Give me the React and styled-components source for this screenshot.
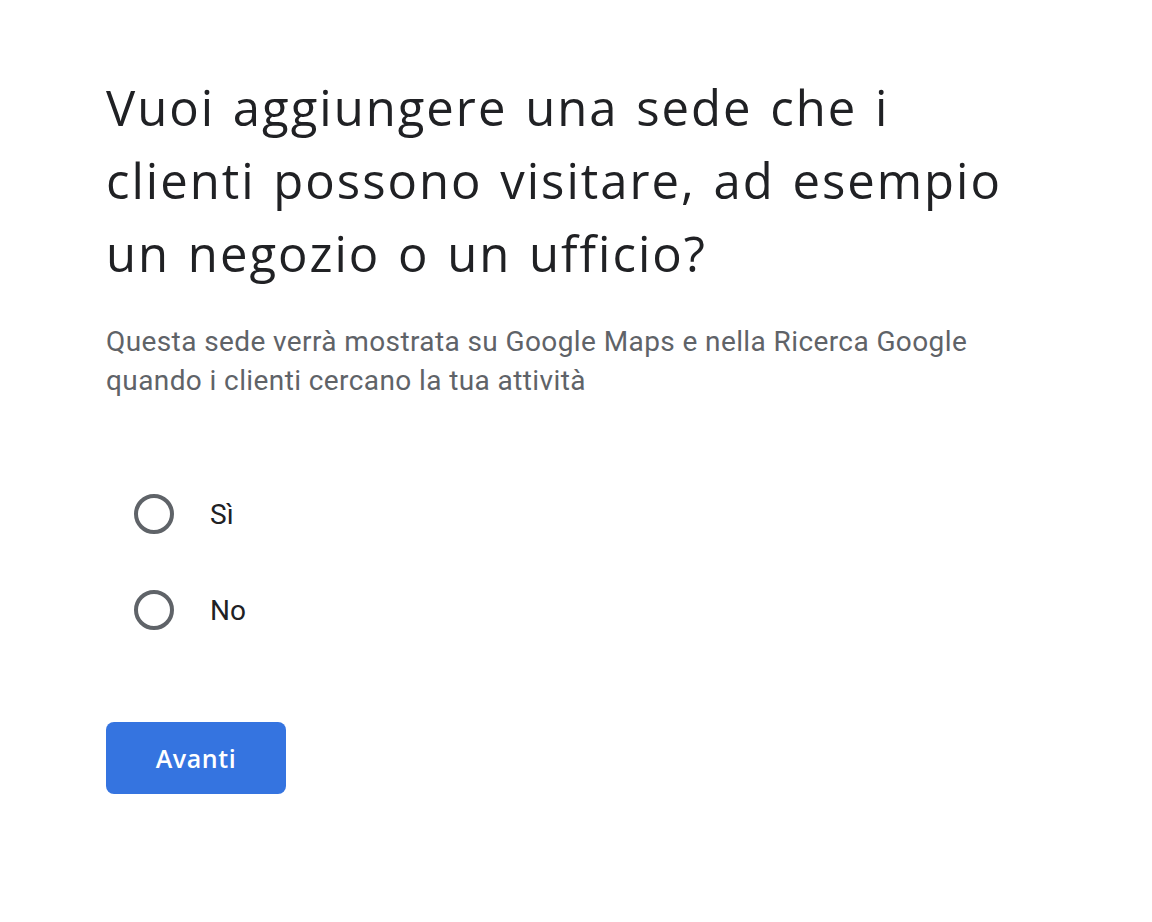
import React, { useState } from "react";
import styled, { createGlobalStyle } from "styled-components";

const GlobalStyle = createGlobalStyle`
  body {
    margin: 0;
    background: #fff;
    font-family: Roboto, "Liberation Sans", sans-serif;
  }
`;

const Page = styled.div`
  padding: 71px 0 0 106px;
  width: 920px;
`;

const Title = styled.h1`
  margin: 0;
  max-width: 915px;
  font-family: "Open Sans", Roboto, sans-serif;
  font-weight: 400;
  font-size: 49px;
  line-height: 73px;
  color: #202124;
  letter-spacing: 2px;
  word-spacing: 3px;
`;

const Subtitle = styled.p`
  margin: 32px 0 0;
  font-size: 28px;
  line-height: 39px;
  color: #5f6368;
  letter-spacing: 0.4px;
  max-width: 880px;
`;

const Options = styled.div`
  margin-top: 94px;
  display: flex;
  flex-direction: column;
  gap: 56px;
  padding-left: 28px;
`;

const Option = styled.label`
  display: flex;
  align-items: center;
  gap: 36px;
  height: 40px;
  cursor: pointer;
  font-size: 28px;
  color: #202124;
`;

const Circle = styled.span`
  box-sizing: border-box;
  width: 40px;
  height: 40px;
  border-radius: 50%;
  border: 4px solid #5f6368;
  display: flex;
  align-items: center;
  justify-content: center;
  &::after {
    content: "";
    width: 20px;
    height: 20px;
    border-radius: 50%;
    background: ${(props) => (props.checked ? "#1a73e8" : "transparent")};
  }
`;

const Button = styled.button`
  margin-top: 92px;
  width: 180px;
  height: 72px;
  border: none;
  border-radius: 8px;
  background: #3574e0;
  color: #fff;
  font-family: "Open Sans", Roboto, sans-serif;
  font-weight: 600;
  font-size: 25px;
  letter-spacing: 0.6px;
  cursor: pointer;
`;

export default function App() {
  const [choice, setChoice] = useState(null);
  return (
    <Page>
      <GlobalStyle />
      <Title>
        Vuoi aggiungere una sede che i clienti possono visitare, ad esempio un
        negozio o un ufficio?
      </Title>
      <Subtitle>
        Questa sede verrà mostrata su Google Maps e nella Ricerca Google quando
        i clienti cercano la tua attività
      </Subtitle>
      <Options>
        {["Sì", "No"].map((label) => (
          <Option key={label} onClick={() => setChoice(label)}>
            <Circle checked={choice === label} />
            {label}
          </Option>
        ))}
      </Options>
      <Button>Avanti</Button>
    </Page>
  );
}
